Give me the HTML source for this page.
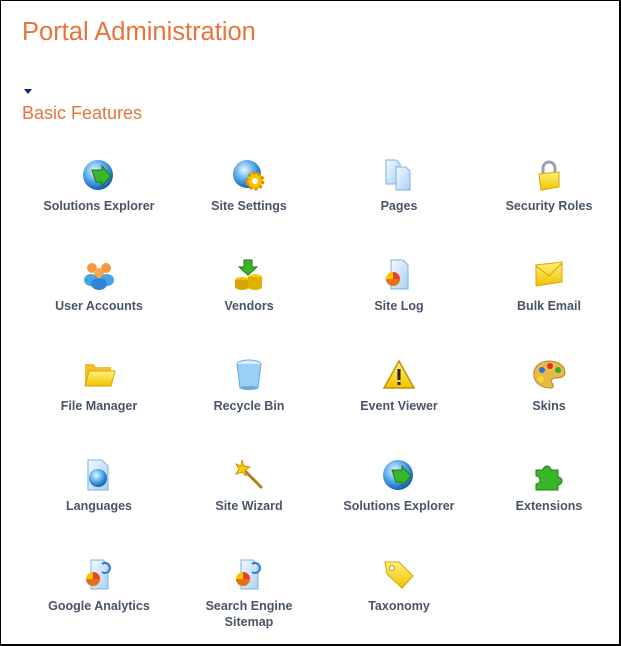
<!DOCTYPE html>
<html><head><meta charset="utf-8"><style>
*{margin:0;padding:0;box-sizing:border-box}
body{width:621px;height:646px;background:#fff;font-family:"Liberation Sans",Arial,sans-serif;overflow:hidden}
.frame{position:absolute;left:0;top:0;width:621px;height:646px;border:1px solid #000;border-right-width:2px;border-bottom-width:2px}
h1{position:absolute;left:22px;top:18px;font-size:25.5px;font-weight:normal;color:#e8743b;white-space:nowrap}
.tri{position:absolute;left:24px;top:89px;width:0;height:0;border-left:4px solid transparent;border-right:4px solid transparent;border-top:5px solid #0a2a7a}
h2{position:absolute;left:22px;top:103px;font-size:18px;font-weight:normal;color:#e8743b}
.it{position:absolute;width:150px;text-align:center;font-size:12.5px;font-weight:bold;color:#4a5468;line-height:16px}
.it svg{display:block;margin:0 auto 6px;width:34px;height:34px}
</style></head><body>
<div class="frame"></div>
<h1>Portal Administration</h1>
<div class="tri"></div>
<h2>Basic Features</h2>
<svg width="0" height="0" style="position:absolute"><defs>
<radialGradient id="gl" cx="40%" cy="35%" r="65%"><stop offset="0" stop-color="#e8f6ff"/><stop offset=".6" stop-color="#4aa3e6"/><stop offset="1" stop-color="#1560b0"/></radialGradient>
<linearGradient id="yl" x1="0" y1="0" x2="0" y2="1"><stop offset="0" stop-color="#fff27a"/><stop offset="1" stop-color="#f2c200"/></linearGradient>
<linearGradient id="pg" x1="0" y1="0" x2="1" y2="1"><stop offset="0" stop-color="#f4f9ff"/><stop offset="1" stop-color="#a9d0f5"/></linearGradient>
</defs></svg>

<div class="it" style="left:24px;top:158px"><svg viewBox="0 0 34 34"><circle cx="16" cy="17" r="15" fill="url(#gl)"/><path d="M10 12h10v-4l9 10-9 10v-4h-6z" fill="#3bb52a" stroke="#1d7a16"/></svg>Solutions Explorer</div>
<div class="it" style="left:174px;top:158px"><svg viewBox="0 0 34 34"><circle cx="15" cy="16" r="14" fill="url(#gl)"/><circle cx="23" cy="23" r="8" fill="#f5c400" stroke="#d89000" stroke-width="3" stroke-dasharray="3 2"/><circle cx="23" cy="23" r="3" fill="#fff"/></svg>Site Settings</div>
<div class="it" style="left:324px;top:158px"><svg viewBox="0 0 34 34"><path d="M4 2h10l4 4v20H4z" fill="url(#pg)" stroke="#7fb2e0"/><path d="M14 9h10l4 4v19H14z" fill="url(#pg)" stroke="#7fb2e0"/></svg>Pages</div>
<div class="it" style="left:474px;top:158px"><svg viewBox="0 0 34 34"><path d="M11 16v-6a6 6 0 0 1 12 0v5" fill="none" stroke="#9aa0b0" stroke-width="3"/><path d="M7 16l20-2v15l-18 3z" fill="url(#yl)" stroke="#d8a400"/></svg>Security Roles</div>

<div class="it" style="left:24px;top:258px"><svg viewBox="0 0 34 34"><circle cx="10" cy="10" r="5" fill="#f59a3c"/><circle cx="24" cy="10" r="5" fill="#f59a3c"/><circle cx="17" cy="15" r="5" fill="#f7a84a"/><ellipse cx="9" cy="22" rx="7" ry="6" fill="#4aa3e6"/><ellipse cx="25" cy="22" rx="7" ry="6" fill="#4aa3e6"/><ellipse cx="17" cy="26" rx="8" ry="6" fill="#2f86d6"/></svg>User Accounts</div>
<div class="it" style="left:174px;top:258px"><svg viewBox="0 0 34 34"><path d="M12 2h8v7h5l-9 8-9-8h5z" fill="#3bb52a" stroke="#1d7a16"/><ellipse cx="10" cy="22" rx="7" ry="3" fill="#f2c200"/><rect x="3" y="22" width="14" height="7" fill="#d9a600"/><ellipse cx="10" cy="29" rx="7" ry="3" fill="#d9a600"/><ellipse cx="23" cy="19" rx="7" ry="3" fill="#f5d21a"/><rect x="16" y="19" width="14" height="10" fill="#e0b000"/><ellipse cx="23" cy="29" rx="7" ry="3" fill="#e0b000"/></svg>Vendors</div>
<div class="it" style="left:324px;top:258px"><svg viewBox="0 0 34 34"><path d="M9 2h12l5 5v24H9z" fill="url(#pg)" stroke="#7fb2e0"/><circle cx="11" cy="21" r="7" fill="#f5c400"/><path d="M11 21V14a7 7 0 0 1 7 7z" fill="#e8402a"/><path d="M4 21a7 7 0 0 0 14 0z" fill="#e05a1a" opacity=".8"/></svg>Site Log</div>
<div class="it" style="left:474px;top:258px"><svg viewBox="0 0 34 34"><path d="M4 7l26-3v20L4 28z" fill="url(#yl)" stroke="#d8a400"/><path d="M4 8l13 10 13-13" fill="none" stroke="#d8a400"/></svg>Bulk Email</div>

<div class="it" style="left:24px;top:358px"><svg viewBox="0 0 34 34"><path d="M3 6h9l2 3h15v19H3z" fill="#f0c030"/><path d="M3 28l4-15h26l-4 15z" fill="url(#yl)" stroke="#d8a400"/></svg>File Manager</div>
<div class="it" style="left:174px;top:358px"><svg viewBox="0 0 34 34"><ellipse cx="17" cy="6" rx="12" ry="4" fill="#d8eefc" stroke="#6aa8d8"/><path d="M5 6l3 24h18l3-24" fill="#9ccff5" stroke="#6aa8d8"/><ellipse cx="17" cy="30" rx="9" ry="2" fill="#6aa8d8"/></svg>Recycle Bin</div>
<div class="it" style="left:324px;top:358px"><svg viewBox="0 0 34 34"><path d="M17 3L32 30H2z" fill="url(#yl)" stroke="#c89000" stroke-width="1.5"/><rect x="15.5" y="11" width="3" height="11" fill="#222"/><rect x="15.5" y="24" width="3" height="3" fill="#222"/></svg>Event Viewer</div>
<div class="it" style="left:474px;top:358px"><svg viewBox="0 0 34 34"><path d="M17 3C6 3 1 11 2 18c1 8 9 12 16 12 4 0 4-3 2-5s0-5 4-5c6 0 9-2 9-6C33 8 26 3 17 3z" fill="#e8b84a" stroke="#b88420"/><circle cx="10" cy="12" r="3" fill="#3070e0"/><circle cx="18" cy="8" r="3" fill="#e03030"/><circle cx="26" cy="12" r="3" fill="#30b030"/><circle cx="9" cy="21" r="3" fill="#f0e020"/></svg>Skins</div>

<div class="it" style="left:24px;top:458px"><svg viewBox="0 0 34 34"><path d="M6 2h14l6 6v24H6z" fill="url(#pg)" stroke="#7fb2e0"/><circle cx="16" cy="20" r="9" fill="url(#gl)"/></svg>Languages</div>
<div class="it" style="left:174px;top:458px"><svg viewBox="0 0 34 34"><path d="M12 12l18 18" stroke="#b08020" stroke-width="3"/><path d="M10 2l2 6 6 1-5 3 1 6-4-4-6 2 3-5-3-5 5 2z" fill="#f5d000" stroke="#d89000"/></svg>Site Wizard</div>
<div class="it" style="left:324px;top:458px"><svg viewBox="0 0 34 34"><circle cx="16" cy="17" r="15" fill="url(#gl)"/><path d="M10 12h10v-4l9 10-9 10v-4h-6z" fill="#3bb52a" stroke="#1d7a16"/></svg>Solutions Explorer</div>
<div class="it" style="left:474px;top:458px"><svg viewBox="0 0 34 34"><path d="M4 12h7a4 4 0 1 1 8 0h7v7a4 4 0 1 1 0 8v5H4v-6a4 4 0 1 0 0-8z" fill="#3bb52a" stroke="#1d7a16"/></svg>Extensions</div>

<div class="it" style="left:24px;top:558px"><svg viewBox="0 0 34 34"><path d="M9 2h12l5 5v24H9z" fill="url(#pg)" stroke="#7fb2e0"/><circle cx="11" cy="21" r="7" fill="#f5c400"/><path d="M11 21V14a7 7 0 0 1 7 7z" fill="#e8402a"/><path d="M4 21a7 7 0 0 0 14 0z" fill="#e05a1a" opacity=".8"/><path d="M20 6a5 5 0 1 1 0 8" fill="none" stroke="#2a7ad0" stroke-width="2"/></svg>Google Analytics</div>
<div class="it" style="left:174px;top:558px"><svg viewBox="0 0 34 34"><path d="M9 2h12l5 5v24H9z" fill="url(#pg)" stroke="#7fb2e0"/><circle cx="11" cy="21" r="7" fill="#f5c400"/><path d="M11 21V14a7 7 0 0 1 7 7z" fill="#e8402a"/><path d="M4 21a7 7 0 0 0 14 0z" fill="#e05a1a" opacity=".8"/><path d="M20 6a5 5 0 1 1 0 8" fill="none" stroke="#2a7ad0" stroke-width="2"/></svg>Search Engine<br>Sitemap</div>
<div class="it" style="left:324px;top:558px"><svg viewBox="0 0 34 34"><path d="M3 4h14l14 14-11 12L5 16z" fill="url(#yl)" stroke="#d8a400"/><circle cx="10" cy="10" r="2.5" fill="#fff" stroke="#c89000"/></svg>Taxonomy</div>
</body></html>
